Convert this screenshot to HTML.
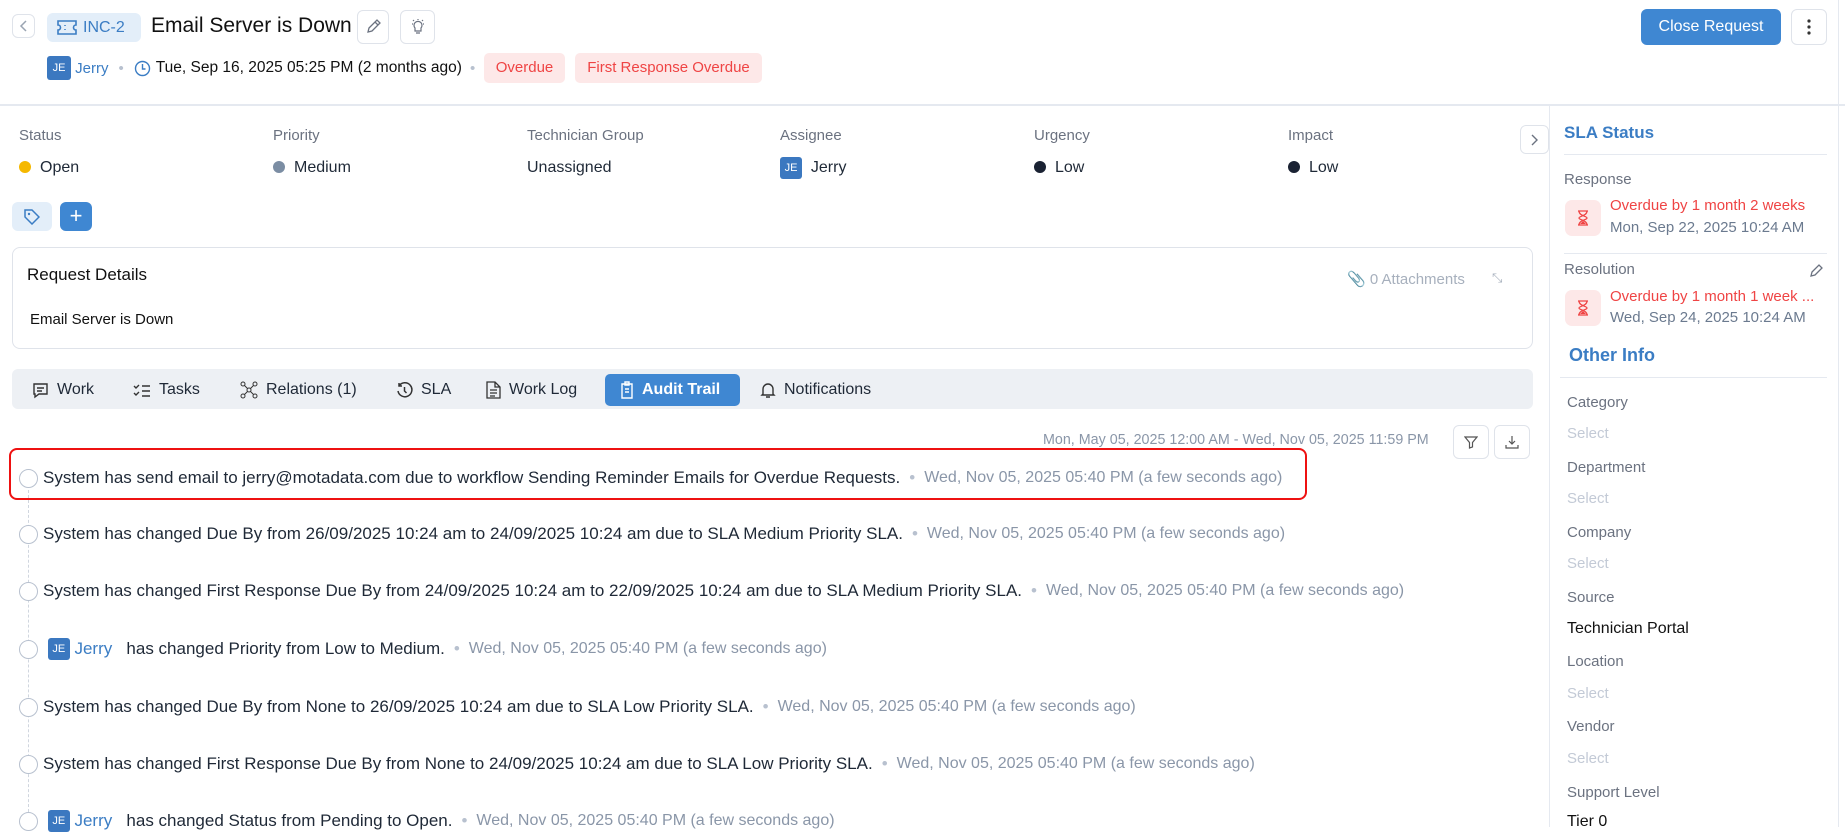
<!DOCTYPE html>
<html><head><meta charset="utf-8"><style>
*{box-sizing:border-box;margin:0;padding:0}
body{width:1845px;height:827px;overflow:hidden;background:#fff;font-family:"Liberation Sans",sans-serif;color:#1f2937;position:relative}
.a{position:absolute;white-space:nowrap}
.btn{position:absolute;border:1px solid #dfe3ea;border-radius:6px;background:#fff;display:flex;align-items:center;justify-content:center}
.lbl{color:#6b7280;font-size:15px}
.val{font-size:16px;color:#1f2937}
.dot{display:inline-block;width:12px;height:12px;border-radius:50%;margin-right:9px;vertical-align:-1px}
.av{display:inline-block;background:#3b78c0;color:#fff;font-size:11px;border-radius:3px;text-align:center;line-height:22px;width:22px;height:22px;vertical-align:middle}
.tab{position:absolute;top:374px;height:32px;font-size:16px;display:flex;align-items:center;gap:8px;color:#1f2937}
.ent{position:absolute;left:19px;font-size:17px;color:#1f2937;white-space:nowrap;display:flex;align-items:center}
.ent .c{width:19px;height:19px;border:1.5px solid #b8c1cf;border-radius:50%;margin-right:5px;background:#fff}
.ent .t{color:#8a96a8;font-size:16px}
.ent .s{color:#b8c1cf;margin:0 9px}
.rl{position:absolute;left:1567px;font-size:15px;color:#6b7280}
.rs{position:absolute;left:1567px;font-size:15px;color:#c3cad6}
</style></head><body>
<div class="btn" style="left:12px;top:14px;width:23px;height:24px"><svg width="10" height="12"><path d="M7 1 L2 6 L7 11" stroke="#9aa4b2" fill="none" stroke-width="1.5"/></svg></div>
<div class="a" style="left:47px;top:13px;width:94px;height:29px;background:#e3eef9;border-radius:6px;color:#3b7dc4;font-size:16px;line-height:29px;padding-left:36px">INC-2
<svg style="position:absolute;left:10px;top:7px" width="20" height="15"><path d="M1 1h18v4a2.5 2.5 0 0 0 0 5v4H1v-4a2.5 2.5 0 0 0 0-5z" stroke="#3b7dc4" fill="none" stroke-width="1.6"/><path d="M8 5v1M8 9v1" stroke="#3b7dc4" stroke-width="1.5"/></svg></div>
<div class="a" style="left:151px;top:14px;font-size:21px;color:#111">Email Server is Down</div>
<div class="btn" style="left:357px;top:10px;width:32px;height:34px"><svg width="16" height="16"><path d="M3 13l1-4 8-8 3 3-8 8z M10 3l3 3" stroke="#6b7280" fill="none" stroke-width="1.3"/></svg></div>
<div class="btn" style="left:400px;top:10px;width:35px;height:34px"><svg width="16" height="18"><path d="M5 10a4 4 0 1 1 6 0v3H5z M6 15h4 M8 1v1 M2 6h1 M13 6h1 M3 2l1 1 M13 2l-1 1" stroke="#6b7280" fill="none" stroke-width="1.2"/></svg></div>
<div class="a" style="left:47px;top:56px;font-size:15px;color:#3b7dc4;display:flex;align-items:center"><span class="av" style="width:24px;height:24px;line-height:24px">JE</span>&nbsp;Jerry<span style="color:#b8c1cf;margin:0 10px">•</span>
<svg width="17" height="17" style="margin-right:5px"><circle cx="8.5" cy="8.5" r="7" stroke="#3b7dc4" fill="none" stroke-width="1.4"/><path d="M8.5 4v5h3" stroke="#3b7dc4" fill="none" stroke-width="1.4"/></svg><span style="color:#111;font-size:15.5px">Tue, Sep 16, 2025 05:25 PM (2 months ago)</span><span style="color:#b8c1cf;margin:0 8px">•</span></div>
<div class="a" style="left:484px;top:53px;width:81px;height:30px;background:#fde8e8;border-radius:5px;color:#ef4444;font-size:15px;line-height:30px;text-align:center">Overdue</div>
<div class="a" style="left:575px;top:53px;width:187px;height:30px;background:#fde8e8;border-radius:5px;color:#ef4444;font-size:15px;line-height:30px;text-align:center">First Response Overdue</div>
<div class="a" style="left:1641px;top:9px;width:140px;height:36px;background:#3f87d2;border-radius:6px;color:#fff;font-size:16px;line-height:36px;text-align:center">Close Request</div>
<div class="btn" style="left:1791px;top:9px;width:36px;height:36px"><svg width="4" height="16"><circle cx="2" cy="2" r="1.6" fill="#333"/><circle cx="2" cy="8" r="1.6" fill="#333"/><circle cx="2" cy="14" r="1.6" fill="#333"/></svg></div>
<div class="a" style="left:0;top:104px;width:1845px;height:2px;background:#e5e9f0"></div>
<div class="a" style="left:1838px;top:0;width:1px;height:827px;background:#e5e9f0"></div>
<div class="a" style="left:1549px;top:106px;width:1px;height:721px;background:#e5e9f0"></div>
<div class="a lbl" style="left:19px;top:127px">Status</div><div class="a val" style="left:19px;top:159px"><span class="dot" style="background:#f5b800"></span>Open</div>
<div class="a lbl" style="left:273px;top:127px">Priority</div><div class="a val" style="left:273px;top:159px"><span class="dot" style="background:#7b8da3"></span>Medium</div>
<div class="a lbl" style="left:527px;top:127px">Technician Group</div><div class="a val" style="left:527px;top:159px">Unassigned</div>
<div class="a lbl" style="left:780px;top:127px">Assignee</div><div class="a val" style="left:780px;top:157px"><span class="av">JE</span>&nbsp; Jerry</div>
<div class="a lbl" style="left:1034px;top:127px">Urgency</div><div class="a val" style="left:1034px;top:159px"><span class="dot" style="background:#1a2233"></span>Low</div>
<div class="a lbl" style="left:1288px;top:127px">Impact</div><div class="a val" style="left:1288px;top:159px"><span class="dot" style="background:#1a2233"></span>Low</div>
<div class="btn" style="left:1520px;top:125px;width:29px;height:29px"><svg width="8" height="12"><path d="M1 1l5 5-5 5" stroke="#6b7280" fill="none" stroke-width="1.4"/></svg></div>
<div class="a" style="left:12px;top:202px;width:40px;height:29px;background:#e3eef9;border-radius:6px"><svg style="margin:7px 12px" width="16" height="16"><path d="M1 1h7l7 7-7 7-7-7z" stroke="#3b7dc4" fill="none" stroke-width="1.5"/><circle cx="5" cy="5" r="1.2" fill="#3b7dc4"/></svg></div>
<div class="a" style="left:60px;top:202px;width:32px;height:29px;background:#3f87d2;border-radius:6px;color:#fff;font-size:22px;line-height:28px;text-align:center">+</div>
<div class="a" style="left:12px;top:247px;width:1521px;height:102px;border:1px solid #dfe3ea;border-radius:8px"></div>
<div class="a" style="left:27px;top:265px;font-size:17px;color:#111">Request Details</div>
<div class="a" style="left:30px;top:311px;font-size:15px;color:#111">Email Server is Down</div>
<div class="a" style="left:1347px;top:270px;font-size:15px;color:#a7b0bd">&#128206; 0 Attachments</div>
<div class="a" style="left:1492px;top:270px;font-size:13px;color:#a7b0bd">⤡</div>
<div class="a" style="left:12px;top:369px;width:1521px;height:40px;background:#edf0f4;border-radius:6px"></div>
<div class="tab" style="left:32px"><svg width="17" height="17"><path d="M2 2h13v10H7l-4 3v-3H2z M5 6h7M5 9h5" stroke="#333" fill="none" stroke-width="1.4"/></svg>Work</div>
<div class="tab" style="left:133px"><svg width="18" height="15"><path d="M1 3l2 2 3-3M1 10l2 2 3-3M9 3h8M9 8h8M9 13h8" stroke="#333" fill="none" stroke-width="1.4"/></svg>Tasks</div>
<div class="tab" style="left:240px"><svg width="18" height="18"><circle cx="3" cy="3" r="2" stroke="#333" fill="none"/><circle cx="15" cy="3" r="2" stroke="#333" fill="none"/><circle cx="3" cy="15" r="2" stroke="#333" fill="none"/><circle cx="15" cy="15" r="2" stroke="#333" fill="none"/><circle cx="9" cy="9" r="2" stroke="#333" fill="none"/><path d="M4.5 4.5l3 3M13.5 4.5l-3 3M4.5 13.5l3-3M13.5 13.5l-3-3" stroke="#333"/></svg>Relations (1)</div>
<div class="tab" style="left:396px"><svg width="17" height="17"><path d="M3 4a7 7 0 1 1-1 5M3 1v3h3M8.5 5v4l2 2" stroke="#333" fill="none" stroke-width="1.5"/></svg>SLA</div>
<div class="tab" style="left:486px"><svg width="15" height="18"><path d="M1 1h8l5 5v11H1z M9 1v5h5 M4 9h7M4 12h7M4 15h5" stroke="#333" fill="none" stroke-width="1.3"/></svg>Work Log</div>
<div class="a" style="left:605px;top:374px;width:135px;height:32px;background:#3f87d2;border-radius:5px"></div>
<div class="tab" style="left:620px;color:#fff;font-weight:bold"><svg width="14" height="18"><path d="M2 3h10v14H2z M5 1h4v3H5z M5 8h4M5 11h4" stroke="#fff" fill="none" stroke-width="1.4"/></svg>Audit Trail</div>
<div class="tab" style="left:760px"><svg width="16" height="18"><path d="M3 13V8a5 5 0 0 1 10 0v5l1 1H2z M6 16h4" stroke="#333" fill="none" stroke-width="1.4"/></svg>Notifications</div>
<div class="a" style="left:1043px;top:432px;font-size:14.3px;color:#8a96a8">Mon, May 05, 2025 12:00 AM - Wed, Nov 05, 2025 11:59 PM</div>
<div class="btn" style="left:1453px;top:425px;width:36px;height:34px"><svg width="14" height="14"><path d="M1 2h12l-4.5 5.5V12l-3 1V7.5z" stroke="#555" fill="none" stroke-width="1.2"/></svg></div>
<div class="btn" style="left:1494px;top:425px;width:36px;height:34px"><svg width="14" height="14"><path d="M7 1v8M4 6l3 3 3-3M1 10v3h12v-3" stroke="#555" fill="none" stroke-width="1.2"/></svg></div>
<div class="a" style="left:28px;top:490px;width:0;height:337px;border-left:1px dashed #d0d6df"></div>
<div class="a" style="left:9px;top:448px;width:1298px;height:52px;border:2.5px solid #e11;border-radius:8px"></div>
<div class="ent" style="top:468px"><span class="c"></span>System has send email to jerry@motadata.com due to workflow Sending Reminder Emails for Overdue Requests.<span class="s">•</span><span class="t">Wed, Nov 05, 2025 05:40 PM (a few seconds ago)</span></div>
<div class="ent" style="top:524px"><span class="c"></span>System has changed Due By from 26/09/2025 10:24 am to 24/09/2025 10:24 am due to SLA Medium Priority SLA.<span class="s">•</span><span class="t">Wed, Nov 05, 2025 05:40 PM (a few seconds ago)</span></div>
<div class="ent" style="top:581px"><span class="c"></span>System has changed First Response Due By from 24/09/2025 10:24 am to 22/09/2025 10:24 am due to SLA Medium Priority SLA.<span class="s">•</span><span class="t">Wed, Nov 05, 2025 05:40 PM (a few seconds ago)</span></div>
<div class="ent" style="top:638px"><span class="c"></span>&nbsp;<span class="av">JE</span>&nbsp;<span style="color:#3b7dc4">Jerry</span>&nbsp;&nbsp;&nbsp;has changed Priority from Low to Medium.<span class="s">•</span><span class="t">Wed, Nov 05, 2025 05:40 PM (a few seconds ago)</span></div>
<div class="ent" style="top:697px"><span class="c"></span>System has changed Due By from None to 26/09/2025 10:24 am due to SLA Low Priority SLA.<span class="s">•</span><span class="t">Wed, Nov 05, 2025 05:40 PM (a few seconds ago)</span></div>
<div class="ent" style="top:754px"><span class="c"></span>System has changed First Response Due By from None to 24/09/2025 10:24 am due to SLA Low Priority SLA.<span class="s">•</span><span class="t">Wed, Nov 05, 2025 05:40 PM (a few seconds ago)</span></div>
<div class="ent" style="top:810px"><span class="c"></span>&nbsp;<span class="av">JE</span>&nbsp;<span style="color:#3b7dc4">Jerry</span>&nbsp;&nbsp;&nbsp;has changed Status from Pending to Open.<span class="s">•</span><span class="t">Wed, Nov 05, 2025 05:40 PM (a few seconds ago)</span></div>
<div class="a" style="left:1564px;top:123px;font-size:17px;font-weight:bold;color:#3b7dc4">SLA Status</div>
<div class="a" style="left:1564px;top:154px;width:263px;height:1px;background:#e5e9f0"></div>
<div class="a" style="left:1564px;top:171px;font-size:15px;color:#6b7280">Response</div>
<div class="a" style="left:1565px;top:200px;width:36px;height:36px;background:#fde8e8;border-radius:7px"><svg style="margin:10px 12px" width="12" height="16"><path d="M1 1h10M1 15h10M2 1c0 5 8 5 8 7s-8 2-8 7M10 1c0 5-8 5-8 7s8 2 8 7" stroke="#ef4444" fill="none" stroke-width="1.3"/><path d="M3 14l3-3 3 3z" fill="#ef4444"/></svg></div>
<div class="a" style="left:1610px;top:197px;font-size:15px;color:#ef4444">Overdue by 1 month 2 weeks</div>
<div class="a" style="left:1610px;top:219px;font-size:15px;color:#6b7a8f">Mon, Sep 22, 2025 10:24 AM</div>
<div class="a" style="left:1564px;top:253px;width:263px;height:1px;background:#e5e9f0"></div>
<div class="a" style="left:1564px;top:261px;font-size:15px;color:#6b7280">Resolution</div>
<svg class="a" style="left:1809px;top:263px" width="15" height="15"><path d="M2 13l1-4 7-7 3 3-7 7z" stroke="#6b7280" fill="none" stroke-width="1.3"/></svg>
<div class="a" style="left:1565px;top:290px;width:36px;height:36px;background:#fde8e8;border-radius:7px"><svg style="margin:10px 12px" width="12" height="16"><path d="M1 1h10M1 15h10M2 1c0 5 8 5 8 7s-8 2-8 7M10 1c0 5-8 5-8 7s8 2 8 7" stroke="#ef4444" fill="none" stroke-width="1.3"/><path d="M3 14l3-3 3 3z" fill="#ef4444"/></svg></div>
<div class="a" style="left:1610px;top:288px;font-size:15px;color:#ef4444">Overdue by 1 month 1 week ...</div>
<div class="a" style="left:1610px;top:309px;font-size:15px;color:#6b7a8f">Wed, Sep 24, 2025 10:24 AM</div>
<div class="a" style="left:1569px;top:345px;font-size:18px;font-weight:bold;color:#3b7dc4">Other Info</div>
<div class="a" style="left:1560px;top:377px;width:267px;height:1px;background:#e5e9f0"></div>
<div class="rl" style="top:394px">Category</div><div class="rs" style="top:425px">Select</div>
<div class="rl" style="top:459px">Department</div><div class="rs" style="top:490px">Select</div>
<div class="rl" style="top:524px">Company</div><div class="rs" style="top:555px">Select</div>
<div class="rl" style="top:589px">Source</div><div class="rl" style="top:620px;color:#111;font-size:16px">Technician Portal</div>
<div class="rl" style="top:653px">Location</div><div class="rs" style="top:685px">Select</div>
<div class="rl" style="top:718px">Vendor</div><div class="rs" style="top:750px">Select</div>
<div class="rl" style="top:784px">Support Level</div><div class="rl" style="top:813px;color:#111;font-size:16px">Tier 0</div>
</body></html>
